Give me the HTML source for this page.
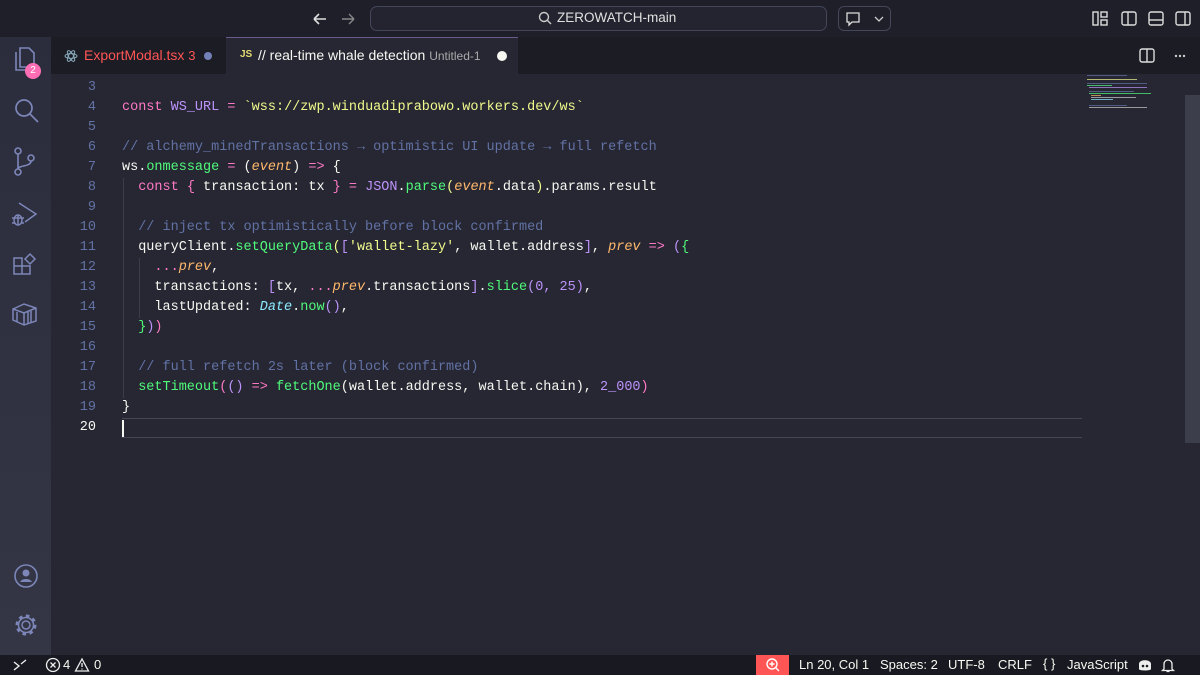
<!DOCTYPE html>
<html><head><meta charset="utf-8"><style>
*{margin:0;padding:0;box-sizing:border-box}
body{width:1200px;height:675px;overflow:hidden;background:#262733;font-family:"Liberation Sans",sans-serif;position:relative;color:#f8f8f2}
.title{position:absolute;left:0;top:0;width:1200px;height:37px;background:#1e1f29}
.act{position:absolute;left:0;top:37px;width:51px;height:618px;background:linear-gradient(#2b2d3d,#343646)}
.tabs{position:absolute;left:51px;top:37px;width:1149px;height:37px;background:#1b1c24}
.tab2{position:absolute;left:226px;top:37px;width:292px;height:37px;background:#262733;border-top:1px solid #6b5b8a}
.status{position:absolute;left:0;top:655px;width:1200px;height:20px;background:#191a21;font-size:13px;color:#f8f8f2}
.code{position:absolute;left:0;top:78px;font-family:"Liberation Mono",monospace;font-size:13.5px;line-height:20px;white-space:pre}
.ln{position:absolute;width:96px;text-align:right;color:#6272a4}
.tx{position:absolute;left:122px}
.k{color:#ff79c6}.v{color:#bd93f9}.s{color:#f1fa8c}.c{color:#6272a4}.f{color:#50fa7b}.p{color:#ffb86c;font-style:italic}.cy{color:#8be9fd;font-style:italic}
svg{position:absolute}
.mm{position:absolute;height:1px;opacity:.7}
</style></head><body>
<div class="title"></div>
<svg style="left:312px;top:10px" width="44" height="18" viewBox="0 0 44 18"><path d="M2 9h12M2 9l5-5M2 9l5 5" stroke="#ddd" stroke-width="1.6" fill="none"/><path d="M30 9h12M42 9l-5-5M42 9l-5 5" stroke="#888" stroke-width="1.4" fill="none"/></svg>
<div style="position:absolute;left:370px;top:6px;width:457px;height:25px;border:1px solid #44465a;border-radius:7px;background:#23242f"></div>
<svg style="left:538px;top:11px" width="14" height="14"><circle cx="6" cy="6" r="4.5" stroke="#ccc" stroke-width="1.4" fill="none"/><path d="M9.5 9.5l3.5 3.5" stroke="#ccc" stroke-width="1.4"/></svg>
<div style="position:absolute;left:557px;top:10px;font-size:13.5px;color:#e0e0e0">ZEROWATCH-main</div>
<div style="position:absolute;left:838px;top:6px;width:53px;height:25px;border:1px solid #44465a;border-radius:6px"></div>
<svg style="left:845px;top:10px" width="42" height="18"><path d="M2 3h12v9H7l-3 3v-3H2z" stroke="#ddd" stroke-width="1.3" fill="none"/><path d="M30 7l4 4 4-4" stroke="#ccc" stroke-width="1.3" fill="none"/></svg>
<svg style="left:1092px;top:10px" width="100" height="18"><g stroke="#ddd" stroke-width="1.4" fill="none"><rect x="1" y="2" width="5" height="13"/><rect x="9" y="2" width="6" height="5"/><rect x="9" y="10" width="6" height="5"/><rect x="30" y="2" width="14" height="13" rx="2"/><path d="M36 2v13"/><rect x="57" y="2" width="14" height="13" rx="2"/><path d="M57 10h14"/><rect x="84" y="2" width="14" height="13" rx="2"/><path d="M93 2v13"/></g></svg>
<div class="act"></div>
<svg style="left:12px;top:46px" width="28" height="30"><path d="M4 6v18h14M8 2h9l5 5v14H8z" stroke="#7d86b8" stroke-width="1.6" fill="none"/></svg>
<div style="position:absolute;left:25px;top:63px;width:16px;height:16px;border-radius:8px;background:#ff6eb4;color:#fff;font-size:10px;text-align:center;line-height:16px">2</div>
<svg style="left:12px;top:96px" width="30" height="30"><circle cx="12" cy="12" r="8" stroke="#7d86b8" stroke-width="1.7" fill="none"/><path d="M18 18l8 8" stroke="#7d86b8" stroke-width="1.7"/></svg>
<svg style="left:12px;top:146px" width="30" height="32"><g stroke="#7d86b8" stroke-width="1.6" fill="none"><circle cx="6" cy="5" r="3"/><circle cx="6" cy="26" r="3"/><circle cx="19" cy="12" r="3"/><path d="M6 8v15M19 15c0 6-13 4-13 8"/></g></svg>
<svg style="left:10px;top:200px" width="30" height="30"><g stroke="#7d86b8" stroke-width="1.5" fill="none"><path d="M9 3l17 11-11 8"/><ellipse cx="8" cy="20" rx="4" ry="5"/><path d="M2 18h12M2 23h3M11 23h3M8 15v10"/></g></svg>
<svg style="left:11px;top:251px" width="30" height="30"><g stroke="#7d86b8" stroke-width="1.5" fill="none"><path d="M3 7h8v8h8v8H3zM3 15h8v8M11 15v8"/><path d="M19 3l5 5-5 5-5-5z"/></g></svg>
<svg style="left:10px;top:300px" width="30" height="28"><g stroke="#7d86b8" stroke-width="1.5" fill="none"><path d="M3 9l11-5 12 4v13l-12 4-11-5z M3 9l11 4 12-5M14 13v12M18 12v11M21 11v11M7 12v10"/></g></svg>
<svg style="left:12px;top:562px" width="28" height="28"><circle cx="14" cy="14" r="11" stroke="#7d86b8" stroke-width="1.6" fill="none"/><circle cx="14" cy="11" r="3.5" fill="#7d86b8"/><path d="M8 20c2-4 10-4 12 0z" fill="#7d86b8"/></svg>
<svg style="left:12px;top:611px" width="28" height="28"><circle cx="14" cy="14" r="4" stroke="#7d86b8" stroke-width="1.5" fill="none"/><circle cx="14" cy="14" r="9" stroke="#7d86b8" stroke-width="3" stroke-dasharray="3.5 3.5" fill="none"/><circle cx="14" cy="14" r="7.5" stroke="#7d86b8" stroke-width="1.5" fill="none"/></svg>
<div class="tabs"></div>
<div class="tab2"></div>
<svg style="left:64px;top:49px" width="14" height="14"><g stroke="#8ab" fill="none" stroke-width="1"><ellipse cx="7" cy="7" rx="6" ry="2.4"/><ellipse cx="7" cy="7" rx="6" ry="2.4" transform="rotate(60 7 7)"/><ellipse cx="7" cy="7" rx="6" ry="2.4" transform="rotate(120 7 7)"/></g></svg>
<div style="position:absolute;left:84px;top:47px;font-size:14px;color:#ff5555">ExportModal.tsx <span style="font-size:13px">3</span></div>
<div style="position:absolute;left:204px;top:52px;width:8px;height:8px;border-radius:4px;background:#7480b8"></div>
<div style="position:absolute;left:240px;top:49px;font-size:10px;font-weight:bold;color:#e6db74">JS</div>
<div style="position:absolute;left:258px;top:47px;font-size:14px;color:#f8f8f2">// real-time whale detection <span style="font-size:12px;color:#aaa">Untitled-1</span></div>
<div style="position:absolute;left:497px;top:51px;width:10px;height:10px;border-radius:5px;background:#f8f8f2"></div>
<svg style="left:1139px;top:47px" width="50" height="18"><rect x="1" y="2" width="14" height="13" rx="2" stroke="#ddd" stroke-width="1.4" fill="none"/><path d="M8 2v13" stroke="#ddd" stroke-width="1.4"/><g fill="#ccc"><circle cx="37" cy="9" r="1.2"/><circle cx="41" cy="9" r="1.2"/><circle cx="45" cy="9" r="1.2"/></g></svg>
<div style="position:absolute;left:1185px;top:95px;width:15px;height:348px;background:#3d3e4b"></div>
<div class="mm" style="left:1087px;top:75px;width:40px;background:#6272a4"></div>
<div class="mm" style="left:1087px;top:79px;width:50px;background:#f1fa8c"></div>
<div class="mm" style="left:1087px;top:83px;width:60px;background:#6272a4"></div>
<div class="mm" style="left:1087px;top:85px;width:25px;background:#50fa7b"></div>
<div class="mm" style="left:1089px;top:87px;width:58px;background:#bd93f9"></div>
<div class="mm" style="left:1089px;top:91px;width:45px;background:#6272a4"></div>
<div class="mm" style="left:1089px;top:93px;width:62px;background:#50fa7b"></div>
<div class="mm" style="left:1091px;top:95px;width:10px;background:#ffb86c"></div>
<div class="mm" style="left:1091px;top:97px;width:45px;background:#ccc"></div>
<div class="mm" style="left:1091px;top:99px;width:22px;background:#8be9fd"></div>
<div class="mm" style="left:1089px;top:105px;width:38px;background:#6272a4"></div>
<div class="mm" style="left:1089px;top:107px;width:58px;background:#ccc"></div>
<div style="position:absolute;left:122px;top:418px;width:960px;height:20px;border-top:1px solid #444555;border-bottom:1px solid #444555"></div>
<div style="position:absolute;left:122px;top:420px;width:2px;height:17px;background:#f8f8f2"></div>
<div style="position:absolute;left:123px;top:178px;width:1px;height:220px;background:#3c3d4c"></div>
<div style="position:absolute;left:139px;top:258px;width:1px;height:60px;background:#3c3d4c"></div>
<div class="code">
<div class="ln" style="top:0">3</div><div class="ln" style="top:20px">4</div><div class="ln" style="top:40px">5</div><div class="ln" style="top:60px">6</div><div class="ln" style="top:80px">7</div><div class="ln" style="top:100px">8</div><div class="ln" style="top:120px">9</div><div class="ln" style="top:140px">10</div><div class="ln" style="top:160px">11</div><div class="ln" style="top:180px">12</div><div class="ln" style="top:200px">13</div><div class="ln" style="top:220px">14</div><div class="ln" style="top:240px">15</div><div class="ln" style="top:260px">16</div><div class="ln" style="top:280px">17</div><div class="ln" style="top:300px">18</div><div class="ln" style="top:320px">19</div><div class="ln" style="top:340px;color:#f8f8f2">20</div>
<div class="tx" style="top:20px"><span class="k">const</span> <span class="v">WS_URL</span> <span class="k">=</span> <span class="s">`wss://zwp.winduadiprabowo.workers.dev/ws`</span></div>
<div class="tx c" style="top:60px">// alchemy_minedTransactions → optimistic UI update → full refetch</div>
<div class="tx" style="top:80px">ws.<span class="f">onmessage</span> <span class="k">=</span> (<span class="p">event</span>) <span class="k">=&gt;</span> {</div>
<div class="tx" style="top:100px">  <span class="k">const</span> <span class="k">{</span> transaction: tx <span class="k">}</span> <span class="k">=</span> <span class="v">JSON</span>.<span class="f">parse</span><span class="s">(</span><span class="p">event</span>.data<span class="s">)</span>.params.result</div>
<div class="tx c" style="top:140px">  // inject tx optimistically before block confirmed</div>
<div class="tx" style="top:160px">  queryClient.<span class="f">setQueryData</span><span class="s">(</span><span class="v">[</span><span class="s">'wallet-lazy'</span>, wallet.address<span class="v">]</span>, <span class="p">prev</span> <span class="k">=&gt;</span> <span class="v">(</span><span class="f">{</span></div>
<div class="tx" style="top:180px">    <span class="k">...</span><span class="p">prev</span>,</div>
<div class="tx" style="top:200px">    transactions: <span class="v">[</span>tx, <span class="k">...</span><span class="p">prev</span>.transactions<span class="v">]</span>.<span class="f">slice</span><span class="v">(0, 25)</span>,</div>
<div class="tx" style="top:220px">    lastUpdated: <span class="cy">Date</span>.<span class="f">now</span><span class="v">()</span>,</div>
<div class="tx" style="top:240px">  <span class="f">}</span><span class="v">)</span><span class="k">)</span></div>
<div class="tx c" style="top:280px">  // full refetch 2s later (block confirmed)</div>
<div class="tx" style="top:300px">  <span class="f">setTimeout</span><span class="k">(</span><span class="v">()</span> <span class="k">=&gt;</span> <span class="f">fetchOne</span>(wallet.address, wallet.chain), <span class="v">2_000</span><span class="k">)</span></div>
<div class="tx" style="top:320px">}</div>
</div>
<div class="status">
<svg style="left:12px;top:3px" width="16" height="14"><path d="M2 4l5 4-5 4M14 2l-5 4" stroke="#eee" stroke-width="1.4" fill="none"/></svg>
<svg style="left:45px;top:2px" width="16" height="16"><circle cx="8" cy="8" r="6.5" stroke="#eee" stroke-width="1.3" fill="none"/><path d="M5.5 5.5l5 5M10.5 5.5l-5 5" stroke="#eee" stroke-width="1.3"/></svg>
<span style="position:absolute;left:63px;top:2px">4</span>
<svg style="left:74px;top:2px" width="16" height="16"><path d="M8 2l6.5 12h-13z" stroke="#eee" stroke-width="1.3" fill="none"/><path d="M8 6v4M8 11.5v1" stroke="#eee" stroke-width="1.3"/></svg>
<span style="position:absolute;left:94px;top:2px">0</span>
<div style="position:absolute;left:756px;top:0;width:33px;height:20px;background:#ff5555"></div>
<svg style="left:765px;top:2px" width="16" height="16"><circle cx="7" cy="7" r="5" stroke="#fff" stroke-width="1.4" fill="none"/><path d="M7 4.5v5M4.5 7h5M10.5 10.5l3.5 3.5" stroke="#fff" stroke-width="1.4"/></svg>
<span style="position:absolute;left:799px;top:2px">Ln 20, Col 1</span>
<span style="position:absolute;left:880px;top:2px">Spaces: 2</span>
<span style="position:absolute;left:948px;top:2px">UTF-8</span>
<span style="position:absolute;left:998px;top:2px">CRLF</span>
<span style="position:absolute;left:1043px;top:1px">{ }</span>
<span style="position:absolute;left:1067px;top:2px">JavaScript</span>
<svg style="left:1137px;top:2px" width="16" height="16"><path d="M2 7c0-5 12-5 12 0v5c0 2-12 2-12 0z" fill="#eee"/><circle cx="6" cy="9" r="1.3" fill="#191a21"/><circle cx="10" cy="9" r="1.3" fill="#191a21"/></svg>
<svg style="left:1160px;top:2px" width="16" height="16"><path d="M4 12V7a4 4 0 018 0v5l1.5 1.5h-11zM6.5 14.5h3" stroke="#eee" stroke-width="1.3" fill="none"/></svg>
</div>
</body></html>
